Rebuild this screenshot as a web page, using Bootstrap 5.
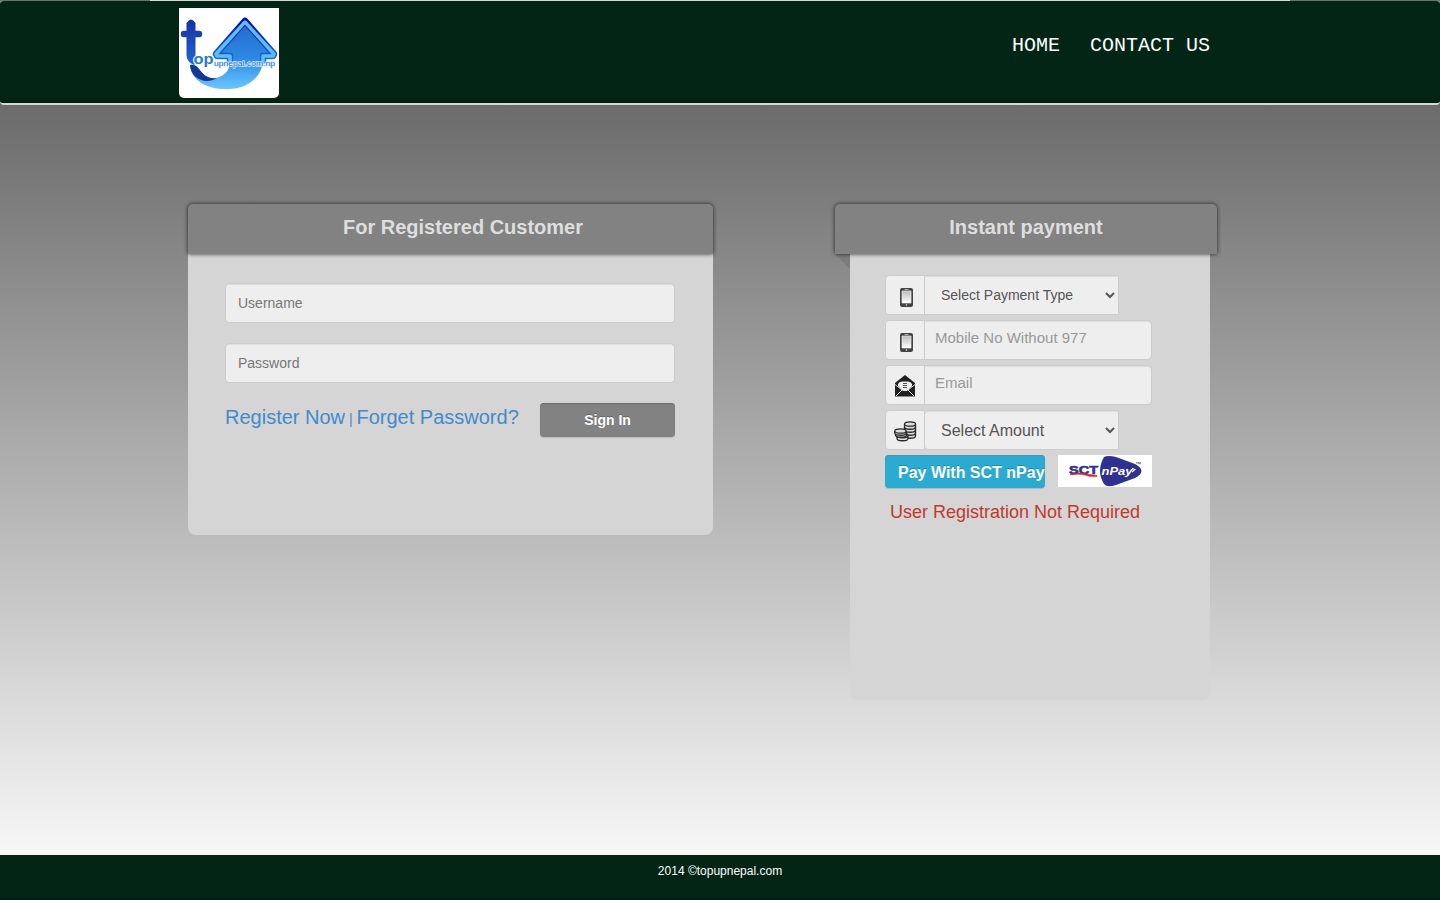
<!DOCTYPE html>
<html lang="en">
<head>
<meta charset="utf-8">
<meta name="viewport" content="width=device-width, initial-scale=1">
<title>topupnepal.com</title>
<link rel="stylesheet" href="https://cdn.jsdelivr.net/npm/bootstrap@5.3.0/dist/css/bootstrap.min.css">
<style>
body{font-family:"Liberation Sans",Arial,sans-serif;font-size:14px;line-height:20px;color:#333;height:900px;overflow:hidden;background:linear-gradient(#585858,#fff) no-repeat}
.topbar{height:105px;background:#022516;border:solid #d5dad7;border-width:1px 0 2px;border-radius:4px;padding:7px 230px 0 179px;box-shadow:inset 0 -5px 3px -3px #011f12}
.topline{position:absolute;top:-1px;left:0;width:150px;height:1px;background:#68746d}
.topline.end{left:1290px}
.brand{width:100px;height:90px;background:#fff;border-radius:0 0 5px 5px;padding:0}
.brand svg{display:block}
.menu a{font:20px/24px "Liberation Mono",monospace;color:#fff;text-decoration:none;white-space:nowrap}
.menu{gap:30px;padding-top:26px}
main{height:750px;padding:99px 230px 0 188px}
.panel{background:#d5d5d5;border-radius:6px 6px 8px 8px}
.login{width:525px;height:331px}
.instant{width:360px;height:496px}
.panel-title{height:50px;margin:0;background:#828282;color:#dedede;font-size:20px;font-weight:700;line-height:46px;border-radius:5px 5px 0 0;box-shadow:0 0 4px rgba(0,0,0,.75)}
.login .panel-title{padding-left:25px}
.instant .panel-title{margin:0 -7px 0 -15px;position:relative}
.instant .panel-title:after{content:"";position:absolute;left:0;top:50px;z-index:-1;border-top:15px solid #7c7c7c;border-left:15px solid transparent}
.form-control,.form-select,.input-group-text{height:40px;background-color:#eee;border:1px solid #ccc;border-radius:4px;font-size:14px;color:#555}
.form-control{padding:6px 12px;box-shadow:inset 0 1px 1px rgba(0,0,0,.075)}
.form-control::placeholder{color:#777}
.login form{padding:29px 38px 0 37px}
.login .form-control{margin-bottom:20px}
.links{color:#428bca;padding-top:2px;line-height:24px;white-space:nowrap}
.links a{font-size:20px;color:#428bca;text-decoration:none}
.signin{width:135px;height:34px;border:0;background:#828282;color:#fff;border-radius:4px;font-size:14px;font-weight:700;padding:0;box-shadow:inset 0 1px 1px #6c6c6c,0 1px 1px #bbb;text-shadow:0 -1px 0 rgba(0,0,0,.25)}
.instant form{padding:21px 58px 0 35px}
.input-group{margin-bottom:5px;height:40px}
.input-group-text{width:40px;padding:5px 0 0 3px;justify-content:center}
.input-group .form-control{color:#555;font-size:15px;padding:0 10px 5px}
.input-group .form-control::placeholder{color:#999}
.input-group .form-select{flex:0 0 195px;padding:0 16px;border-radius:0;box-shadow:inset 0 1px 1px rgba(0,0,0,.075);background:#eee url("data:image/svg+xml,%3Csvg xmlns='http://www.w3.org/2000/svg' width='10' height='7'%3E%3Cpath d='M1 1l4 4 4-4' fill='none' stroke='%23555' stroke-width='2'/%3E%3C/svg%3E") no-repeat right 3px center/10px 7px}
.input-group .amount{font-size:16px;padding-top:2px;border-radius:4px 0 0 4px!important}
.pay{width:160px;height:33px;border:0;border-radius:4px;background:#2aabd2;color:#fff;font-size:16px;font-weight:700;line-height:31px;padding:2px 0 0 13px;text-align:left;white-space:nowrap;box-shadow:inset 0 1px 1px #4394ac,0 1px 1px #b8b8b8;text-shadow:0 -1px 0 rgba(0,0,0,.2)}
.note{font-size:18px;line-height:24px;color:#c0392b;margin:12px 0 0 5px;white-space:nowrap}
footer{height:45px;background:#022516;color:#fff;font-size:12px;line-height:17px;padding-top:8px;box-shadow:inset 0 -3px 2px -1px #011f12}
</style>
</head>
<body>
<nav class="topbar d-flex justify-content-between align-items-start position-relative">
 <a class="brand" href="#" aria-label="topupnepal.com.np">
 <svg width="100" height="90" viewBox="0 0 100 90">
  <defs>
   <linearGradient id="arrowFill" gradientUnits="userSpaceOnUse" x1="0" y1="12" x2="0" y2="81"><stop stop-color="#2468c9"/><stop offset=".55" stop-color="#2c88e4"/><stop offset="1" stop-color="#6bc7ff"/></linearGradient>
   <linearGradient id="edgeFill" x2="0" y2="1"><stop stop-color="#0909a5"/><stop offset="1" stop-color="#1478d5"/></linearGradient>
   <linearGradient id="tFill" x2="0" y2="1"><stop stop-color="#1330a5"/><stop offset="1" stop-color="#2267d2"/></linearGradient>
  </defs>
  <path d="M11 57Q16 56 20 61C26 70 34 72 40 69C48 66 51 61 51 51H84C84 69 68 81 50 81C29 82 12 73 11 57Z" fill="url(#arrowFill)"/>
  <path d="M11 57Q16 56 20 61C26 69 31 71 38 70C27 77 12 71 11 57Z" fill="#123799"/>
  <path d="M51 55V48H38L37 46L66 13L95 46L94 48H84V55" fill="url(#arrowFill)" stroke="url(#edgeFill)" stroke-width="6.500" stroke-linejoin="round"/>
  <path d="M51 56V48H38L37 46L66 14L95 46L94 48H84V56" fill="none" stroke="#5fbcff" stroke-width="3.500" stroke-linejoin="round"/>
  <path d="M5 26H20" fill="none" stroke="#1940b0" stroke-width="6.500" stroke-linecap="round"/>
  <path d="M7.500 15Q12 8 16.500 15V48Q16.500 52 19 53L15 57Q7.500 54 7.500 47Z" fill="url(#tFill)"/>
  <text x="14.500" y="55.500" font-family="Liberation Sans,sans-serif" font-size="14.500" font-weight="700" textLength="20" lengthAdjust="spacingAndGlyphs" fill="#267bcf" stroke="#fff" stroke-width="2" paint-order="stroke">op</text>
  <text x="35" y="57.500" font-family="Liberation Sans,sans-serif" font-size="8" textLength="61" lengthAdjust="spacingAndGlyphs" fill="#2d71c3" stroke="#d9ecff" stroke-width="1.300" paint-order="stroke">upnepal.com.np</text>
 </svg></a>
 <div class="menu d-flex"><a href="#">HOME</a><a href="#">CONTACT US</a></div>
 <i class="topline"></i><i class="topline end"></i>
</nav>
<main class="d-flex justify-content-between align-items-start">
 <section class="panel login">
  <h3 class="panel-title text-center">For Registered Customer</h3>
  <form>
   <input class="form-control" placeholder="Username">
   <input class="form-control" type="password" placeholder="Password">
   <div class="d-flex justify-content-between align-items-start">
    <div class="links"><a href="#">Register Now</a> | <a href="#">Forget Password?</a></div>
    <button type="button" class="signin btn">Sign In</button>
   </div>
  </form>
 </section>
 <section class="panel instant">
  <h3 class="panel-title text-center">Instant payment</h3>
  <form>
   <div class="input-group flex-nowrap">
    <span class="input-group-text"><svg width="14" height="20"><defs><linearGradient id="screen" x2="0" y2="1"><stop stop-color="#bbb"/><stop offset="1" stop-color="#fff"/></linearGradient></defs><rect width="13" height="19" rx="2" fill="#444"/><path d="M2 3h9v12h-9z" fill="url(#screen)" stroke="#eee" stroke-width=".7"/><path d="M4.500 1.500h4" stroke="#aaa"/><circle cx="6.500" cy="17" r=".8" fill="#eee"/></svg></span>
    <select class="form-select"><option>Select Payment Type</option></select>
   </div>
   <div class="input-group flex-nowrap">
    <span class="input-group-text"><svg width="14" height="20"><rect width="13" height="19" rx="2" fill="#444"/><path d="M2 3h9v12h-9z" fill="url(#screen)" stroke="#eee" stroke-width=".7"/><path d="M4.500 1.500h4" stroke="#aaa"/><circle cx="6.500" cy="17" r=".8" fill="#eee"/></svg></span>
    <input class="form-control" placeholder="Mobile No Without 977">
   </div>
   <div class="input-group flex-nowrap">
    <span class="input-group-text" style="padding:2px 0 0"><svg width="20" height="22"><path d="M0 8L10 0l10 8v13.500H0z" fill="#202020"/><path d="M3 9Q4 6.500 7 6.500h6Q16 6.500 17 9v2l-5 5h-4l-5-5z" fill="#eee"/><path d="M0 9.500l7 5.500-6 6M20 9.500l-7 5.500 6 6" fill="none" stroke="#eee" stroke-width=".9"/><path d="M8 8.500h4M8 10.500h4M8 12.500h4" stroke="#555"/></svg></span>
    <input class="form-control" placeholder="Email">
   </div>
   <div class="input-group flex-nowrap">
    <span class="input-group-text" style="padding:2px 0 0"><svg width="23" height="21" fill="#ddd" stroke="#292929" stroke-width="1.300"><path d="M10.500 3v12c0 3 11 3 11 0V3"/><path d="M10.500 12c0 3 11 3 11 0M10.500 9c0 3 11 3 11 0M10.500 6c0 3 11 3 11 0" fill="none"/><ellipse cx="16" cy="3" rx="5.500" ry="2.200"/><path d="M3 14.500v3c0 3 11 3 11 0v-3c0-3-11-3-11 0c0 3 11 3 11 0"/><path d="M1.500 12v2c0 3 11 3 11 0v-2"/><path d="M.8 10v2c0 3 11.400 3 11.400 0v-2"/><ellipse cx="6.500" cy="10" rx="5.700" ry="2.200"/></svg></span>
    <select class="form-select amount"><option>Select Amount</option></select>
   </div>
   <div class="d-flex justify-content-between align-items-start">
    <button type="button" class="pay">Pay With SCT nPay</button>
    <svg width="94" height="32"><path d="M0 0h94v32H0z" fill="#fff"/><path d="M46 2Q50 0 58 2L77 9Q90 16 77 23L58 30Q49 33 46 29Q38 16 46 2Z" fill="#2e3192"/><text x="11" y="19" font-family="Liberation Sans,sans-serif" font-size="11" font-weight="700" textLength="29" lengthAdjust="spacingAndGlyphs" fill="#2e3192" stroke="#2e3192" stroke-width=".6">SCT</text><path d="M12 19.500Q22 17 29 19L39 20.500v1Q31 22 27 20Q20 18.500 12 20z" fill="#ed1c24" stroke="#ed1c24" stroke-width=".5"/><text x="43.500" y="19.500" font-family="Liberation Sans,sans-serif" font-size="11" font-weight="700" font-style="italic" textLength="31" lengthAdjust="spacingAndGlyphs" fill="#fff">nPay</text><path d="M74 13.500l3 1-3 2.500" fill="none" stroke="#fff" stroke-width="1.100"/><text x="77" y="11" font-family="Liberation Sans,sans-serif" font-size="6" fill="#333">™</text></svg>
   </div>
   <p class="note">User Registration Not Required</p>
  </form>
 </section>
</main>
<footer class="text-center">2014 ©topupnepal.com</footer>
<script src="https://cdn.jsdelivr.net/npm/bootstrap@5.3.0/dist/js/bootstrap.bundle.min.js"></script>
</body>
</html>
